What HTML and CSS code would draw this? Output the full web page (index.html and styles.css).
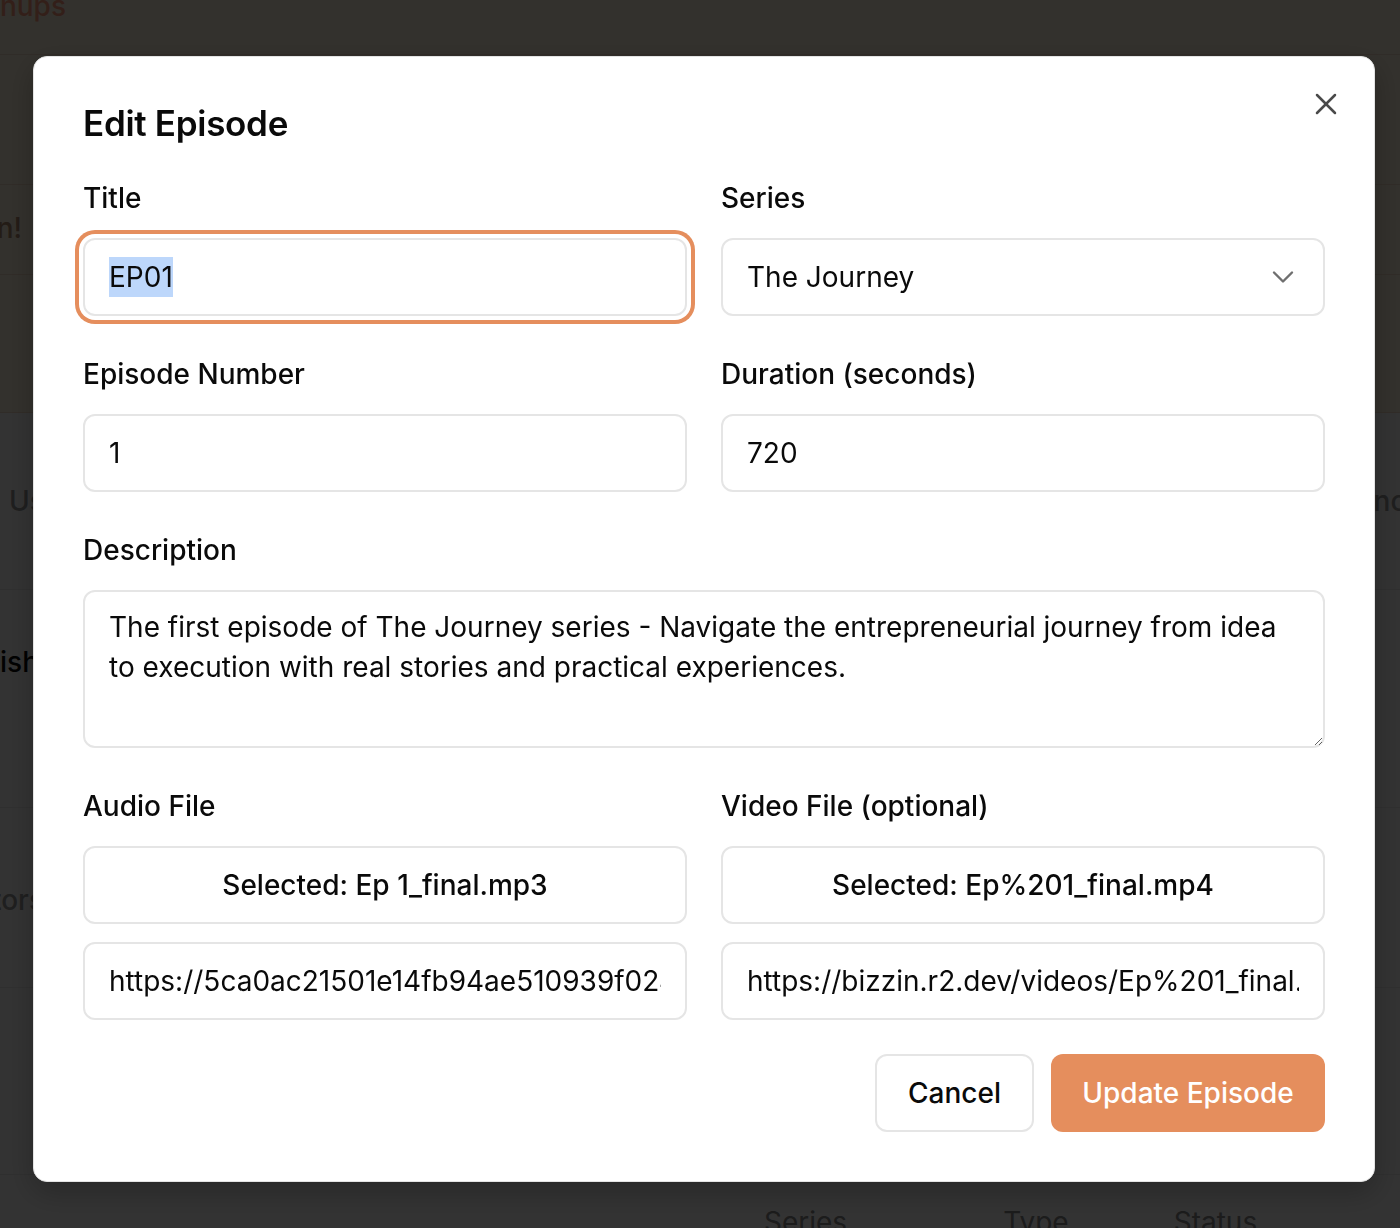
FILE: index.html
```html
<!DOCTYPE html>
<html lang="en">
<head>
<meta charset="utf-8">
<title>Edit Episode</title>
<link rel="stylesheet" href="styles.css">
</head>
<body>
<div class="page">
  <div class="bg-top">
    <div class="bg-row bg-r1"><span class="bg-anchor anchor-mockups"><span class="bg-text bg-orange">Signups</span></span></div>
    <div class="bg-row bg-r2"></div>
    <div class="bg-row bg-r3"><span class="bg-anchor anchor-join"><span class="bg-text bg-brown">Let's begin!</span></span></div>
    <div class="bg-row bg-r4"></div>
  </div>
  <div class="bg-table">
    <div class="bg-row bg-r5"><span class="bg-text bg-gray shift-us">Users</span><span class="bg-text bg-gray bg-right">Finance</span></div>
    <div class="bg-row bg-r6"><span class="bg-anchor anchor-ish"><span class="bg-text bg-dark">Publish</span></span></div>
    <div class="bg-row bg-r7"><span class="bg-anchor anchor-ors"><span class="bg-text bg-gray">Creators</span></span></div>
    <div class="bg-row bg-r8"></div>
    <div class="bg-head">
      <span class="bg-text head-series">Series</span>
      <span class="bg-text head-type">Type</span>
      <span class="bg-text head-status">Status</span>
    </div>
  </div>
</div>

<div class="overlay">
  <div class="modal">
    <button class="close" aria-label="Close">
      <svg viewBox="0 0 24 24" width="36" height="36" fill="none" stroke="currentColor" stroke-width="1.7" stroke-linecap="round">
        <path d="M18 6 6 18"/><path d="m6 6 12 12"/>
      </svg>
    </button>
    <h2 class="modal-title">Edit Episode</h2>
    <div class="form-grid">
      <div class="field">
        <label class="label">Title</label>
        <div class="control control-focus"><span class="selected-text">EP01</span></div>
      </div>
      <div class="field">
        <label class="label">Series</label>
        <div class="control control-select">
          <span>The Journey</span>
          <svg class="chevron" viewBox="0 0 24 24" width="36" height="36" fill="none" stroke="currentColor" stroke-width="1.6" stroke-linecap="round" stroke-linejoin="round"><path d="m6 9 6 6 6-6"/></svg>
        </div>
      </div>
      <div class="field">
        <label class="label">Episode Number</label>
        <input class="control" type="text" value="1">
      </div>
      <div class="field">
        <label class="label">Duration (seconds)</label>
        <input class="control" type="text" value="720">
      </div>
      <div class="field field-full">
        <label class="label">Description</label>
        <textarea class="control control-area">The first episode of The Journey series - Navigate the entrepreneurial journey from idea to execution with real stories and practical experiences.</textarea>
      </div>
      <div class="field">
        <label class="label">Audio File</label>
        <div class="file-stack">
          <button class="control control-file">Selected: Ep 1_final.mp3</button>
          <input class="control" type="text" value="https://5ca0ac21501e14fb94ae510939f024a7.r2.cloudflarestorage.com/audio/Ep%201_final.mp3">
        </div>
      </div>
      <div class="field">
        <label class="label">Video File (optional)</label>
        <div class="file-stack">
          <button class="control control-file">Selected: Ep%201_final.mp4</button>
          <input class="control" type="text" value="https://bizzin.r2.dev/videos/Ep%201_final.mp4">
        </div>
      </div>
    </div>
    <div class="actions">
      <button class="btn btn-outline">Cancel</button>
      <button class="btn btn-primary">Update Episode</button>
    </div>
  </div>
</div>
</body>
</html>
```

FILE: styles.css
```css
* { box-sizing: border-box; }

html, body {
  margin: 0;
  padding: 0;
  height: 100%;
  overflow: hidden;
}

body {
  font-family: Inter, "Noto Sans", "Liberation Sans", sans-serif;
  color: #0a0a0a;
  background: #ffffff;
}

/* ---------- background page ---------- */
.page {
  width: 1400px;
  height: 1228px;
  overflow: hidden;
}

.bg-top {
  background: #fff5df;
}

.bg-table {
  background: #ffffff;
}

.bg-row {
  display: flex;
  align-items: center;
  justify-content: space-between;
  border-bottom: 1px solid #f1dcc6;
}

.bg-table .bg-row { border-bottom-color: #ececec; }

.bg-r1 { height: 55px; align-items: flex-start; }
.bg-r2 { height: 130px; }
.bg-r3 { height: 90px; }
.bg-r4 { height: 138px; }
.bg-r5 { height: 177px; }
.bg-r6 { height: 218px; }
.bg-r7 { height: 180px; }
.bg-r8 { height: 187px; }

/* anchors: text is right-aligned to a fixed edge, overflowing leftwards */
.bg-anchor {
  display: flex;
  justify-content: flex-end;
  flex: none;
}
.anchor-mockups { width: 66px; margin-top: -14px; }
.anchor-join { width: 22px; margin-top: -4px; }
.anchor-ish { width: 39px; margin-top: -74px; }
.anchor-ors { width: 44px; margin-top: 4px; }

.bg-text {
  font-size: 28px;
  line-height: 40px;
  font-weight: 500;
  white-space: nowrap;
}

.bg-orange { color: #ff9a7e; }
.bg-brown { color: #b08a70; }
.bg-gray { color: #9a9a9a; }
.bg-dark { color: #0a0a0a; }

.shift-us { margin-left: 9px; }
.bg-right { margin-right: -23px; }

.bg-head {
  display: flex;
  padding-top: 27px;
  height: 60px;
}
.head-series { margin-left: 764px; color: #8a8a8a; font-weight: 400; }
.head-type { margin-left: 156px; color: #8a8a8a; font-weight: 400; }
.head-status { margin-left: 105px; color: #8a8a8a; font-weight: 400; }

/* ---------- overlay & modal ---------- */
.overlay {
  position: fixed;
  inset: 0;
  background: rgba(0, 0, 0, 0.8);
  padding: 56px 0 0 33px;
}

.modal {
  position: relative;
  width: 1342px;
  height: 1126px;
  background: #ffffff;
  border: 1px solid #e3e3e3;
  border-radius: 14px;
  padding: 44px 49px 49px;
  box-shadow: 0 10px 30px rgba(0, 0, 0, 0.25);
}

.close {
  position: absolute;
  top: 29px;
  right: 30px;
  width: 36px;
  height: 36px;
  padding: 0;
  border: none;
  background: none;
  color: #4a4a4a;
  display: flex;
  align-items: center;
  justify-content: center;
}

.modal-title {
  margin: 0 0 33px;
  font-size: 35px;
  line-height: 44px;
  font-weight: 600;
  letter-spacing: -0.3px;
  color: #0a0a0a;
}

.form-grid {
  display: grid;
  grid-template-columns: 1fr 1fr;
  column-gap: 34px;
  row-gap: 38px;
}

.field {
  display: flex;
  flex-direction: column;
  gap: 20px;
}

.field-full { grid-column: 1 / -1; }

.label {
  font-size: 28px;
  line-height: 40px;
  font-weight: 500;
  color: #0a0a0a;
}

.control {
  display: flex;
  align-items: center;
  width: 100%;
  height: 78px;
  padding: 0 24px;
  border: 2px solid #e5e5e5;
  border-radius: 12px;
  background: #ffffff;
  font-family: inherit;
  font-size: 28px;
  line-height: 40px;
  color: #0a0a0a;
  outline: none;
}

input.control {
  display: block;
}

.control-focus {
  box-shadow: 0 0 0 4px #ffffff, 0 0 0 8px #e58e5d;
}

.selected-text {
  background: #bdd7fb;
}

.control-select {
  justify-content: space-between;
}

.chevron {
  color: #6f6f6f;
  margin-right: -2px;
  flex: none;
}

.control-area {
  display: block;
  height: 158px;
  padding: 15px 24px;
  resize: vertical;
}

.file-stack {
  display: flex;
  flex-direction: column;
  gap: 18px;
}

.control-file {
  justify-content: center;
  font-weight: 500;
  cursor: pointer;
}

.actions {
  display: flex;
  justify-content: flex-end;
  gap: 17px;
  margin-top: 34px;
}

.btn {
  height: 78px;
  border-radius: 12px;
  font-family: inherit;
  font-size: 28px;
  font-weight: 500;
  padding: 0;
  white-space: nowrap;
  cursor: pointer;
}

.btn-outline {
  width: 159px;
  background: #ffffff;
  border: 2px solid #e5e5e5;
  color: #0a0a0a;
}

.btn-primary {
  width: 274px;
  background: #e58e5d;
  border: none;
  color: #ffffff;
}
```
